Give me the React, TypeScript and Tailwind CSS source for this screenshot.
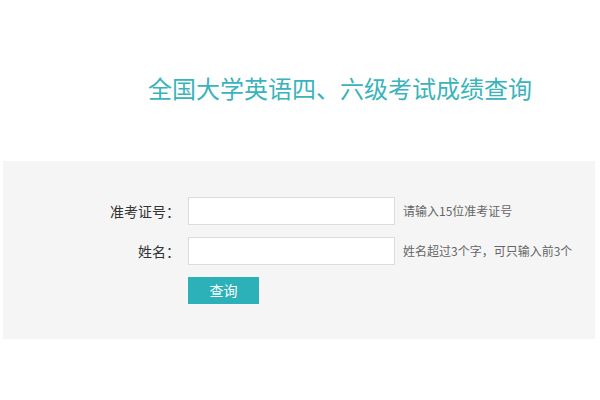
import { useState } from "react";

const font = { fontFamily: '"Noto Sans CJK SC", "Noto Sans", sans-serif' };

export default function App() {
  const [zkzh, setZkzh] = useState("");
  const [xm, setXm] = useState("");

  return (
    <div className="h-[400px] w-[600px] bg-white text-[#333]" style={font}>
      <header className="flex h-[161px] items-center pl-[148px] pt-[15px]">
        <h1 className="text-[24px] leading-none font-normal text-[#3ab3bc]">
          全国大学英语四、六级考试成绩查询
        </h1>
      </header>

      <section className="ml-[3px] flex h-[178px] w-[592px] flex-col gap-3 bg-[#f5f5f5] pt-[36px]">
        <div className="flex items-center">
          <label htmlFor="zkzh" className="w-[185px] pr-[8px] text-right text-[14px] text-[#333]">
            准考证号：
          </label>
          <input
            id="zkzh"
            value={zkzh}
            onChange={(e) => setZkzh(e.target.value)}
            className="h-[28px] w-[207px] border border-[#dcdcdc] bg-white px-2 text-[13px] outline-none"
          />
          <span className="pl-[8px] text-[12px] text-[#666]">请输入15位准考证号</span>
        </div>

        <div className="flex items-center">
          <label htmlFor="xm" className="w-[185px] pr-[8px] text-right text-[14px] text-[#333]">
            姓名：
          </label>
          <input
            id="xm"
            value={xm}
            onChange={(e) => setXm(e.target.value)}
            className="h-[28px] w-[207px] border border-[#dcdcdc] bg-white px-2 text-[13px] outline-none"
          />
          <span className="pl-[8px] text-[12px] text-[#666]">姓名超过3个字，可只输入前3个</span>
        </div>

        <div className="flex pl-[185px]">
          <button
            type="button"
            className="h-[27px] w-[71px] bg-[#2cb1b9] text-[14px] text-white"
          >
            查询
          </button>
        </div>
      </section>
    </div>
  );
}
